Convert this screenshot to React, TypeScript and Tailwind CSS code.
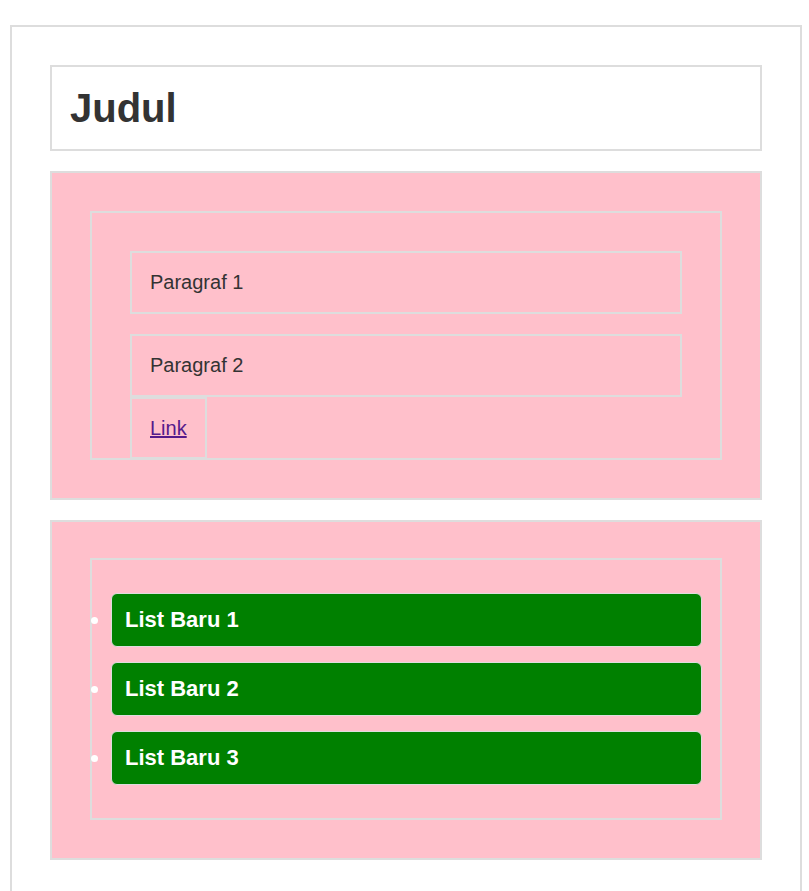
import React from 'react';

const items = ['List Baru 1', 'List Baru 2', 'List Baru 3'];

const App: React.FC = () => {
  return (
    <div className="min-h-[891px] bg-white pt-[25px] pl-[10px] text-[20px] leading-[23px] text-[#333] font-['Liberation_Sans',Arial,sans-serif]">
      <div className="w-[792px] border-2 border-[#ddd] p-[18px]">
        <h1 className="m-5 border-2 border-[#ddd] p-[18px] text-[40px] leading-[46px] font-bold">Judul</h1>

        <div className="m-5 border-2 border-[#ddd] bg-[#ffc0cb] p-[18px]">
          <div className="m-5 border-2 border-[#ddd] p-[18px]">
            <p className="m-5 border-2 border-[#ddd] p-[18px]">Paragraf 1</p>
            <p className="m-5 border-2 border-[#ddd] p-[18px]">Paragraf 2</p>
            <a href="#" className="mx-5 inline border-2 border-[#ddd] p-[18px] text-[#551a8b] underline">
              Link
            </a>
          </div>
        </div>

        <div className="mx-5 mt-[19px] mb-5 border-2 border-[#ddd] bg-[#ffc0cb] p-[18px]">
          <ul className="mx-5 mt-[18px] mb-5 list-outside list-disc border-2 border-[#ddd] p-[18px]">
            {items.map((item) => (
              <li
                key={item}
                className="my-[15px] ml-px rounded-[6px] border border-[#ddd] bg-[#008000] px-[13px] py-[14px] text-[22px] leading-[24px] font-bold text-white"
              >
                {item}
              </li>
            ))}
          </ul>
        </div>
      </div>
    </div>
  );
};

export default App;
